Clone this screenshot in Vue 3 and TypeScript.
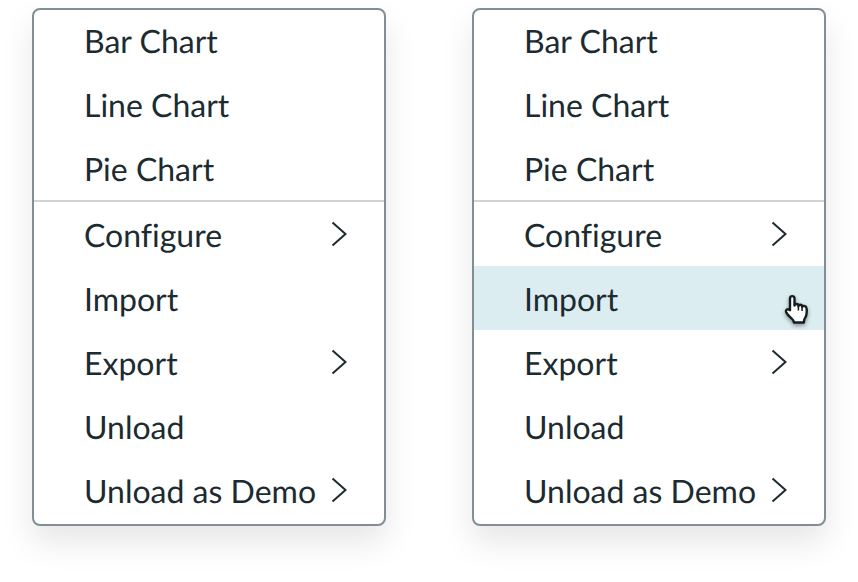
<script setup lang="ts">
interface Item { label: string; sub?: boolean; hover?: boolean }
const groups: Item[][] = [
  [{ label: 'Bar Chart' }, { label: 'Line Chart' }, { label: 'Pie Chart' }],
  [
    { label: 'Configure', sub: true },
    { label: 'Import' },
    { label: 'Export', sub: true },
    { label: 'Unload' },
    { label: 'Unload as Demo', sub: true },
  ],
]
const menus = [{ hovered: '' }, { hovered: 'Import' }]
</script>

<template>
  <div class="page">
    <div v-for="menu in menus" :key="menu.hovered" class="menu">
      <ul v-for="(group, g) in groups" :key="g" class="group" :class="g === 0 ? 'charts' : 'actions'">
        <li
          v-for="item in group"
          :key="item.label"
          class="item"
          :class="{ hover: item.label === menu.hovered }"
        >
          <span class="label">{{ item.label }}</span>
          <svg v-if="item.sub" class="chev" width="16" height="26" viewBox="0 0 16 26" fill="none">
            <path d="M1.500 1.500 L14.500 13 L1.500 24.500" stroke="#1c2b30" stroke-width="2" />
          </svg>
          <svg v-if="item.label === menu.hovered" class="hand" width="26" height="32" viewBox="0 0 26 32">
            <path
              d="M6 4.500c0-3.200 4.500-3.200 4.500 0V11.500c0-2 3.900-2 3.900 0v.8c0-2 3.700-2 3.700 0v.8c.3-1.800 4-1.600 4.400.9.400 2 .2 5.200-.3 7.400-.4 1.700-1.700 3-2 4.500-.2.900-.3 1.600-.3 2.600H10c-.3-2-1.300-3-2.800-4.300-1.800-1.600-4-3.600-5-6-.6-1.600.2-3 1.700-3 1 0 1.500.4 2.100 1z"
              fill="#fff"
              stroke="#141e22"
              stroke-width="2.400"
              stroke-linejoin="round"
            />
            <path d="M14.400 12.500v4M18.100 13.500v3.500" stroke="#141e22" stroke-width="1.500" fill="none" />
          </svg>
        </li>
      </ul>
    </div>
  </div>
</template>

<style scoped>
.page {
  display: flex;
  gap: 86px;
  padding: 8px 32px 56px;
  width: 858px;
  height: 582px;
  box-sizing: border-box;
  font-family: Lato, sans-serif;
  font-variant-ligatures: none;
  text-rendering: geometricPrecision;
}
.menu {
  width: 354px;
  height: 518px;
  box-sizing: border-box;
  background: #fff;
  border: 2px solid #7f8f95;
  border-radius: 8px;
  box-shadow: 0 16px 32px rgba(0, 0, 0, 0.1);
}
.group {
  list-style: none;
  margin: 0;
  padding: 0;
}
.charts {
  border-bottom: 2px solid #cfd4d6;
  height: 192px;
  box-sizing: border-box;
}
.item {
  height: 64px;
  box-sizing: border-box;
  display: flex;
  align-items: center;
  justify-content: space-between;
  padding: 0 37px 0 50px;
  position: relative;
  font-size: 32px;
  color: #1c2b30;
}
.charts .item {
  padding-bottom: 4px;
}
.chev {
  flex: none;
}
.item.hover {
  background: #dcedf2;
}
.hand {
  position: absolute;
  right: 14px;
  top: 28px;
  filter: drop-shadow(0 2px 2px rgba(0, 0, 0, 0.4));
}
</style>
